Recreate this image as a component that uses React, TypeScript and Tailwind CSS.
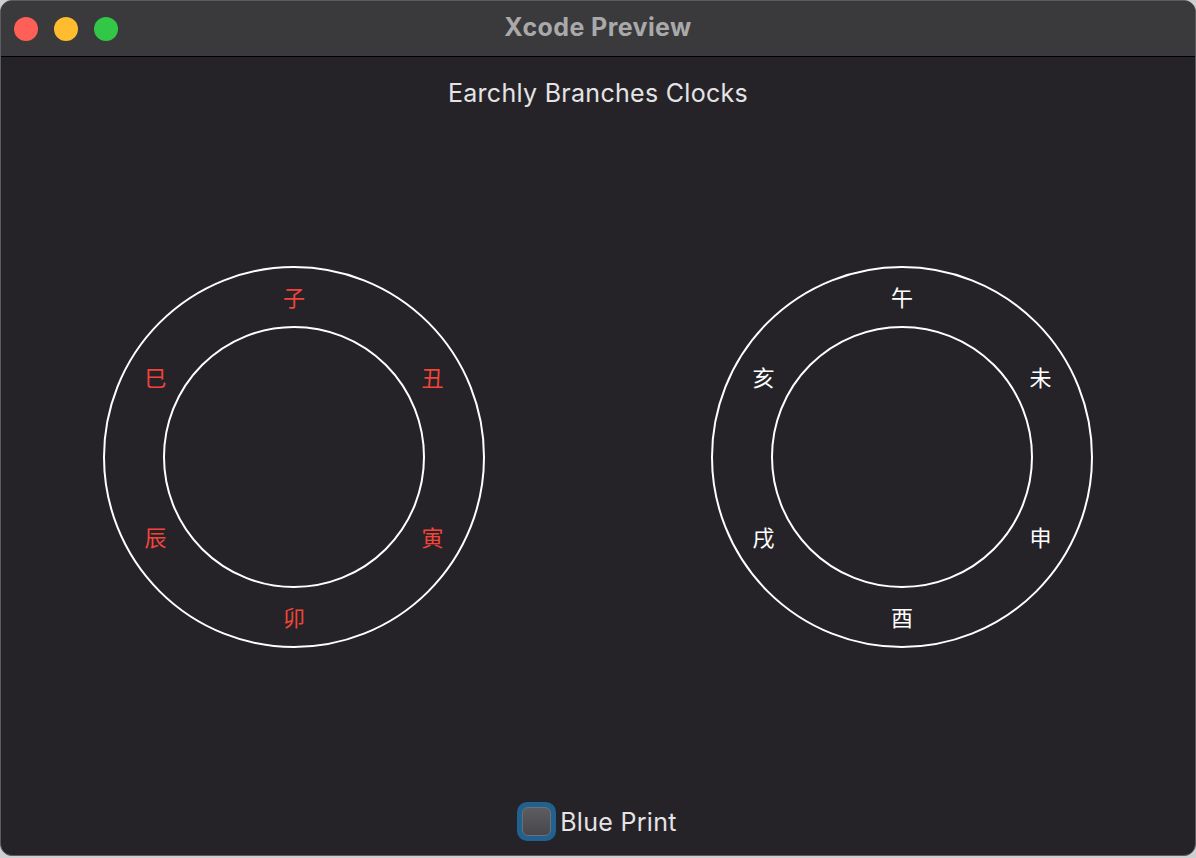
import React from 'react'

const LEFT = ['子', '丑', '寅', '卯', '辰', '巳']
const RIGHT = ['午', '未', '申', '酉', '戌', '亥']

function Clock({ labels, color }: { labels: string[]; color: string }) {
  return (
    <div className="relative h-[382px] w-[382px]">
      <svg width="382" height="382" viewBox="0 0 382 382" className="absolute inset-0">
        <circle cx="191" cy="191" r="190" fill="none" stroke="#ffffff" strokeWidth="2" />
        <circle cx="191" cy="191" r="130" fill="none" stroke="#ffffff" strokeWidth="2" />
      </svg>
      {labels.map((l, i) => {
        const a = (i * 60 * Math.PI) / 180
        const x = 191 + Math.sin(a) * 160
        const y = 191 - Math.cos(a) * 160
        return (
          <span
            key={l}
            className={`absolute flex h-[28px] w-[28px] items-center justify-center text-[22px] leading-none ${color}`}
            style={{ left: x - 14, top: y - 13 }}
          >
            {l}
          </span>
        )
      })}
    </div>
  )
}

export default function App() {
  return (
    <div
      className="h-[858px] w-[1196px] bg-[#cfcfcf]"
      style={{ fontFamily: 'Inter, "Noto Sans CJK SC", sans-serif' }}
    >
      <div className="flex h-[856px] w-[1196px] flex-col overflow-hidden rounded-[12px] border border-[#5c5c5e] bg-[#252328]">
        {/* Title bar */}
        <div className="relative flex h-[56px] shrink-0 items-center border-b border-black bg-[#3a3a3c]">
          <div className="flex items-center gap-[16px] pl-[13px]">
            <span className="h-[24px] w-[24px] rounded-full bg-[#fe5f57]" />
            <span className="h-[24px] w-[24px] rounded-full bg-[#febc2e]" />
            <span className="h-[24px] w-[24px] rounded-full bg-[#33c748]" />
          </div>
          <div className="absolute inset-x-0 top-0 flex h-[54px] items-center justify-center text-[25px] font-bold tracking-[0.4px] text-[#a9a9aa]">
            Xcode Preview
          </div>
        </div>

        {/* Content */}
        <div className="flex flex-1 flex-col items-center">
          <div className="pt-[22px] text-[25px] leading-[28px] tracking-[0.3px] text-[#e4e3e6]">Earchly Branches Clocks</div>
          <div className="mt-[159px] flex gap-[226px]">
            <Clock labels={LEFT} color="text-[#f2443a]" />
            <Clock labels={RIGHT} color="text-white" />
          </div>
          <div className="mt-[154px] flex items-center gap-[4px] pr-[2px]">
            <span className="flex h-[39px] w-[39px] items-center justify-center rounded-[10px] bg-[#20618f]">
              <span className="h-[29px] w-[29px] rounded-[6px] border border-[#6f6e73] bg-gradient-to-b from-[#5d5c61] to-[#48474c]" />
            </span>
            <span className="text-[25px] leading-[30px] tracking-[0.3px] text-[#e4e3e6]">Blue Print</span>
          </div>
        </div>
      </div>
    </div>
  )
}
